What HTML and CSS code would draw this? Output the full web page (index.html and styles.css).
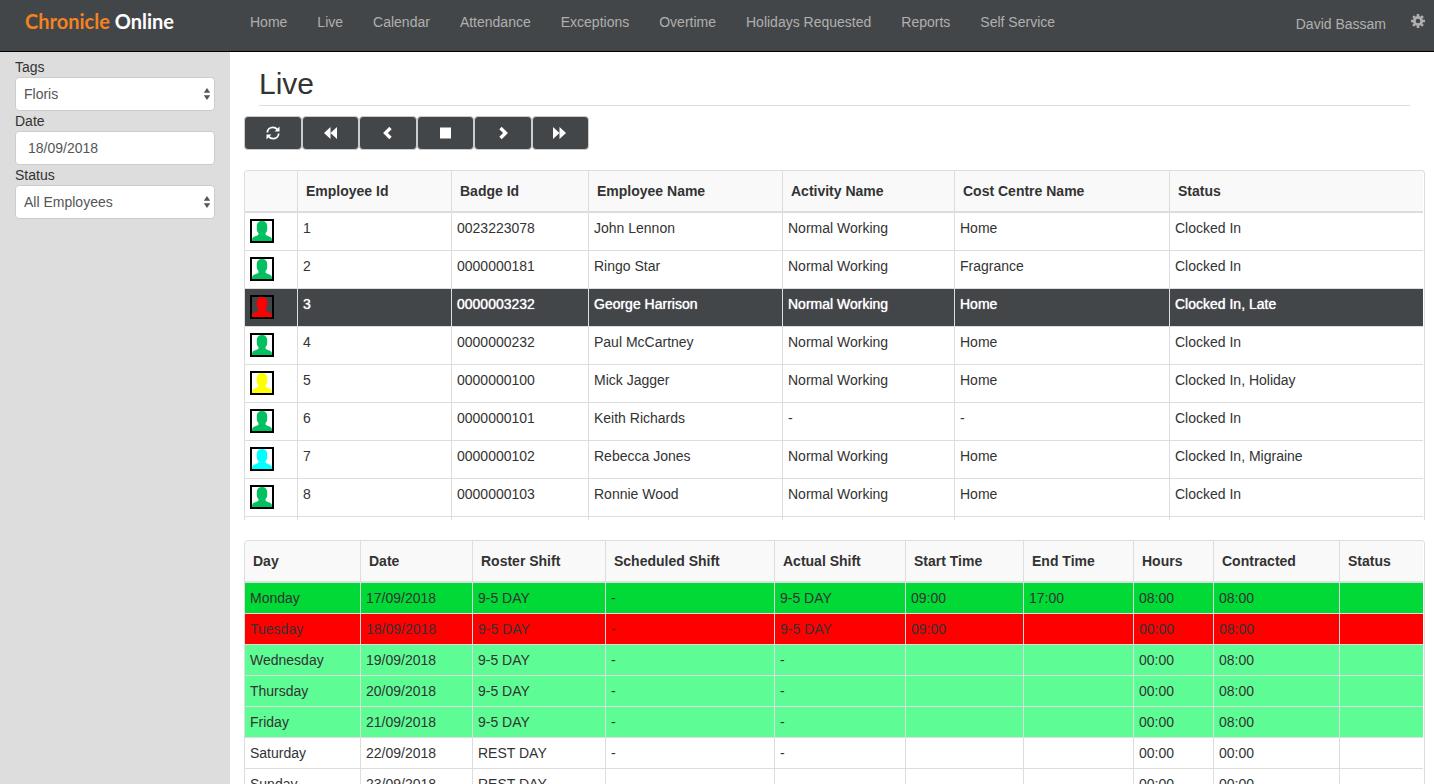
FILE: index.html
```html
<!DOCTYPE html>
<html lang="en">
<head>
    <meta charset="UTF-8">
    <meta name="viewport" content="width=device-width, initial-scale=1.0">
    <title>Chronicle Online - Live</title>
    <link rel="stylesheet" href="styles.css">
</head>
<body>
    <!-- Icons used more than once -->
    <svg class="sprite" aria-hidden="true">
        <symbol id="person" viewBox="0 0 20 20">
            <path d="M10 0C6.500 0 4.800 2 4.800 5v2.500c0 2 .6 3.500 1.700 4.500v1.500C5.500 15 1.500 15.300.5 17c-.3.800-.5 1.800-.5 3h20c0-1.200-.2-2.200-.5-3-1-1.700-5-2-6-3.500V12c1.100-1 1.700-2.500 1.700-4.500V5c0-3-1.700-5-5.200-5z"/>
        </symbol>
        <symbol id="arrows" viewBox="0 0 8 12">
            <path d="M4 0l3.200 4.800H.8zM4 12l3.200-4.800H.8z"/>
        </symbol>
    </svg>

    <header class="navbar">
        <a href="#" class="brand"><span class="brand-accent">Chronicle</span> Online</a>
        <nav class="menu">
            <a href="#">Home</a>
            <a href="#">Live</a>
            <a href="#">Calendar</a>
            <a href="#">Attendance</a>
            <a href="#">Exceptions</a>
            <a href="#">Overtime</a>
            <a href="#">Holidays Requested</a>
            <a href="#">Reports</a>
            <a href="#">Self Service</a>
        </nav>
        <div class="account">
            <a href="#" class="user">David Bassam</a>
            <a href="#" class="settings" aria-label="Settings">
                <svg width="14" height="14" viewBox="0 0 14 14">
                    <g fill="none" stroke="#b0b0b0">
                        <circle cx="7" cy="7" r="3.700" stroke-width="2.800"/>
                        <path stroke-width="2.600" d="M7 0v2.500M7 11.500V14M0 7h2.500M11.500 7H14M2.100 2.100l1.700 1.700M10.200 10.200l1.700 1.700M2.100 11.900l1.700-1.700M10.200 3.800l1.700-1.700"/>
                    </g>
                </svg>
            </a>
        </div>
    </header>

    <div class="page">
        <aside class="sidebar">
            <label for="tags">Tags</label>
            <div class="select-box">
                <select id="tags" class="field"><option>Floris</option></select>
                <svg class="select-arrows"><use href="#arrows"/></svg>
            </div>
            <label for="date">Date</label>
            <input type="text" id="date" class="field date" value="18/09/2018">
            <label for="status">Status</label>
            <div class="select-box">
                <select id="status" class="field"><option>All Employees</option></select>
                <svg class="select-arrows"><use href="#arrows"/></svg>
            </div>
        </aside>

        <main class="content">
            <h2>Live</h2>

            <div class="toolbar">
                <button type="button" aria-label="Refresh">
                    <svg viewBox="0 0 14 14"><path fill="none" stroke="#fff" stroke-width="1.800" d="M1.300 6.500C1.500 3.500 4 1.300 7 1.300c1.700 0 3.200.8 4.200 2M12.700 7.500c-.2 3-2.700 5.200-5.700 5.200-1.700 0-3.200-.8-4.200-2"/><path d="M13.500.5v5H8.600zM.5 13.500v-5h4.900z"/></svg>
                </button>
                <button type="button" aria-label="First">
                    <svg viewBox="0 0 14 14"><path d="M7.500 1v12L1 7zM14 1v12L7.500 7z"/></svg>
                </button>
                <button type="button" aria-label="Previous">
                    <svg viewBox="0 0 14 14"><path d="M8.300.8l2.400 2.400L6.900 7l3.800 3.800-2.400 2.400L2.100 7z"/></svg>
                </button>
                <button type="button" aria-label="Stop">
                    <svg viewBox="0 0 14 14"><path d="M2 1.500h11v11H2z"/></svg>
                </button>
                <button type="button" aria-label="Next">
                    <svg viewBox="0 0 14 14"><path d="M5.700.8L3.300 3.200 7.100 7l-3.800 3.800 2.400 2.400L11.900 7z"/></svg>
                </button>
                <button type="button" aria-label="Last">
                    <svg viewBox="0 0 14 14"><path d="M0 1v12l6.500-6zM6.500 1v12L13 7z"/></svg>
                </button>
            </div>

            <div class="grid employees">
                <table>
                    <colgroup>
                        <col class="w53"><col class="w154"><col class="w137"><col class="w194"><col class="w172"><col class="w215"><col>
                    </colgroup>
                    <thead>
                        <tr><th></th><th>Employee Id</th><th>Badge Id</th><th>Employee Name</th><th>Activity Name</th><th>Cost Centre Name</th><th>Status</th></tr>
                    </thead>
                    <tbody>
                        <tr><td><svg class="avatar in"><use href="#person"/></svg></td><td>1</td><td>0023223078</td><td>John Lennon</td><td>Normal Working</td><td>Home</td><td>Clocked In</td></tr>
                        <tr><td><svg class="avatar in"><use href="#person"/></svg></td><td>2</td><td>0000000181</td><td>Ringo Star</td><td>Normal Working</td><td>Fragrance</td><td>Clocked In</td></tr>
                        <tr class="selected"><td><svg class="avatar late"><use href="#person"/></svg></td><td>3</td><td>0000003232</td><td>George Harrison</td><td>Normal Working</td><td>Home</td><td>Clocked In, Late</td></tr>
                        <tr><td><svg class="avatar in"><use href="#person"/></svg></td><td>4</td><td>0000000232</td><td>Paul McCartney</td><td>Normal Working</td><td>Home</td><td>Clocked In</td></tr>
                        <tr><td><svg class="avatar holiday"><use href="#person"/></svg></td><td>5</td><td>0000000100</td><td>Mick Jagger</td><td>Normal Working</td><td>Home</td><td>Clocked In, Holiday</td></tr>
                        <tr><td><svg class="avatar in"><use href="#person"/></svg></td><td>6</td><td>0000000101</td><td>Keith Richards</td><td>-</td><td>-</td><td>Clocked In</td></tr>
                        <tr><td><svg class="avatar sick"><use href="#person"/></svg></td><td>7</td><td>0000000102</td><td>Rebecca Jones</td><td>Normal Working</td><td>Home</td><td>Clocked In, Migraine</td></tr>
                        <tr><td><svg class="avatar in"><use href="#person"/></svg></td><td>8</td><td>0000000103</td><td>Ronnie Wood</td><td>Normal Working</td><td>Home</td><td>Clocked In</td></tr>
                        <tr><td></td><td></td><td></td><td></td><td></td><td></td><td></td></tr>
                    </tbody>
                </table>
            </div>

            <div class="grid week">
                <table>
                    <colgroup>
                        <col class="w116"><col class="w112"><col class="w133"><col class="w169"><col class="w131"><col class="w118"><col class="w110"><col class="w80"><col class="w126"><col>
                    </colgroup>
                    <thead>
                        <tr><th>Day</th><th>Date</th><th>Roster Shift</th><th>Scheduled Shift</th><th>Actual Shift</th><th>Start Time</th><th>End Time</th><th>Hours</th><th>Contracted</th><th>Status</th></tr>
                    </thead>
                    <tbody>
                        <tr class="worked"><td>Monday</td><td>17/09/2018</td><td>9-5 DAY</td><td>-</td><td>9-5 DAY</td><td>09:00</td><td>17:00</td><td>08:00</td><td>08:00</td><td></td></tr>
                        <tr class="problem"><td>Tuesday</td><td>18/09/2018</td><td>9-5 DAY</td><td>-</td><td>9-5 DAY</td><td>09:00</td><td></td><td>00:00</td><td>08:00</td><td></td></tr>
                        <tr class="planned"><td>Wednesday</td><td>19/09/2018</td><td>9-5 DAY</td><td>-</td><td>-</td><td></td><td></td><td>00:00</td><td>08:00</td><td></td></tr>
                        <tr class="planned"><td>Thursday</td><td>20/09/2018</td><td>9-5 DAY</td><td>-</td><td>-</td><td></td><td></td><td>00:00</td><td>08:00</td><td></td></tr>
                        <tr class="planned"><td>Friday</td><td>21/09/2018</td><td>9-5 DAY</td><td>-</td><td>-</td><td></td><td></td><td>00:00</td><td>08:00</td><td></td></tr>
                        <tr><td>Saturday</td><td>22/09/2018</td><td>REST DAY</td><td>-</td><td>-</td><td></td><td></td><td>00:00</td><td>00:00</td><td></td></tr>
                        <tr><td>Sunday</td><td>23/09/2018</td><td>REST DAY</td><td>-</td><td>-</td><td></td><td></td><td>00:00</td><td>00:00</td><td></td></tr>
                    </tbody>
                </table>
            </div>
        </main>
    </div>
</body>
</html>
```
FILE: styles.css
```css
* {
    box-sizing: border-box;
}
body {
    display: flex;
    flex-direction: column;
    height: 100vh;
    margin: 0;
    overflow: hidden;
    font-family: "Liberation Sans", Arial, sans-serif;
    font-size: 14px;
    line-height: 20px;
    color: #333;
    background-color: #fff;
}
a {
    color: inherit;
    text-decoration: none;
}
.sprite {
    display: none;
}

/* Top bar */
.navbar {
    display: flex;
    align-items: flex-start;
    flex: none;
    height: 52px;
    padding: 0 9px 0 25px;
    background-color: #434648;
    border-bottom: 1px solid #000;
    color: #b0b0b0;
}
.brand {
    width: 210px;
    padding-top: 11px;
    font-family: "Trebuchet MS", Lato, sans-serif;
    font-size: 20px;
    font-weight: bold;
    color: #fff;
}
.brand-accent {
    color: #f58220;
}
.menu {
    display: flex;
    padding-top: 12px;
}
.menu a {
    padding: 0 15px;
}
.menu a:hover,
.account a:hover {
    color: #fff;
}
.account {
    display: flex;
    gap: 25px;
    margin-left: auto;
    padding-top: 14px;
}
.settings svg {
    display: block;
}

/* Filters */
.page {
    display: flex;
    flex: 1;
    min-height: 0;
}
.sidebar {
    flex: none;
    width: 230px;
    padding: 5px 15px;
    background-color: #ddd;
}
.sidebar label {
    display: block;
}
.field {
    display: block;
    width: 100%;
    height: 34px;
    padding: 0 8px;
    border: 1px solid #ccc;
    border-radius: 4px;
    background-color: #fff;
    color: #555;
    font: inherit;
    appearance: none;
}
.date {
    padding: 0 12px;
}
.select-box {
    position: relative;
}
.select-arrows {
    position: absolute;
    top: 11px;
    right: 4px;
    width: 8px;
    height: 12px;
    fill: #555;
    pointer-events: none;
}

/* Main area */
.content {
    display: flex;
    flex-direction: column;
    flex: 1;
    min-width: 0;
    padding: 0 9px 0 14px;
}
h2 {
    flex: none;
    margin: 0 15px 10px;
    padding: 15px 0 5px;
    border-bottom: 1px solid #ddd;
    font-size: 30px;
    font-weight: normal;
    line-height: 33px;
}
.toolbar {
    display: grid;
    grid-template-columns: repeat(6, 1fr);
    flex: none;
    width: 345px;
    margin-bottom: 20px;
}
.toolbar button {
    display: flex;
    align-items: center;
    justify-content: center;
    height: 34px;
    padding: 0;
    border: 1px solid #ccc;
    border-radius: 4px;
    background-color: #434648;
    cursor: pointer;
}
.toolbar svg {
    width: 14px;
    height: 14px;
    fill: #fff;
}

/* Tables */
.grid {
    padding-right: 1px;
    border: 1px solid #ddd;
    border-bottom: none;
    border-radius: 4px 4px 0 0;
    overflow: hidden;
}
.employees {
    flex: none;
    height: 350px;
    margin-bottom: 20px;
}
.week {
    flex: 1;
}
table {
    width: 100%;
    table-layout: fixed;
    border-collapse: separate;
    border-spacing: 0;
}
th {
    height: 42px;
    padding: 0 8px;
    border-right: 1px solid #ddd;
    border-bottom: 2px solid #ddd;
    background-color: #f9f9f9;
    text-align: left;
}
td {
    height: 31px;
    padding: 5px;
    border-right: 1px solid #ddd;
    border-bottom: 1px solid #ddd;
    vertical-align: top;
}
.employees td {
    height: 38px;
}
th:last-child,
td:last-child {
    border-right: none;
}
.selected {
    background-color: #434648;
    color: #fff;
    text-shadow: 0 0 1px #fff;
}
.worked {
    background-color: #00d936;
}
.problem {
    background-color: #f00;
}
.planned {
    background-color: #5dfc94;
}

.avatar {
    display: block;
    width: 24px;
    height: 24px;
    margin-top: 1px;
    border: 2px solid #000;
}
.in {
    fill: #00c060;
}
.late {
    fill: #f00;
}
.holiday {
    fill: #ff0;
}
.sick {
    fill: #0ff;
}

/* Column widths, the last column takes what is left */
.w53 { width: 53px; }
.w80 { width: 80px; }
.w110 { width: 110px; }
.w112 { width: 112px; }
.w116 { width: 116px; }
.w118 { width: 118px; }
.w126 { width: 126px; }
.w131 { width: 131px; }
.w133 { width: 133px; }
.w137 { width: 137px; }
.w154 { width: 154px; }
.w169 { width: 169px; }
.w172 { width: 172px; }
.w194 { width: 194px; }
.w215 { width: 215px; }
```
